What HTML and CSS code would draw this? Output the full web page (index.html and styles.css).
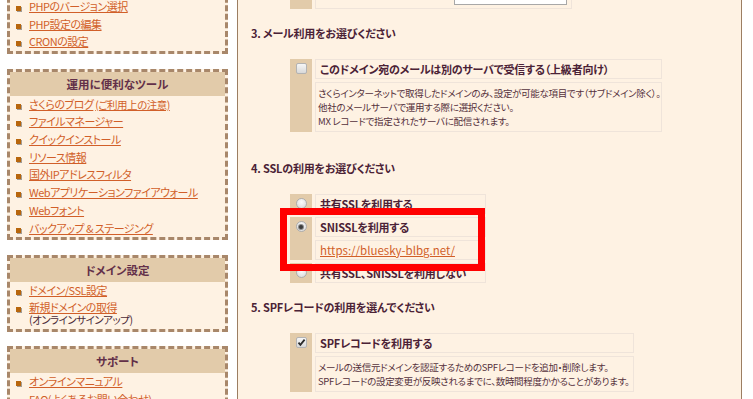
FILE: index.html
```html
<!DOCTYPE html>
<html lang="ja">
<head>
<meta charset="utf-8">
<title>コントロールパネル</title>
<link rel="stylesheet" href="styles.css">
</head>
<body>
<div class="page">
  <aside class="sidebar">
    <div class="box">
      <div class="box-title"></div>
      <ul class="links">
        <li><a href="#">PHPのバージョン選択</a></li>
        <li><a href="#">PHP設定の編集</a></li>
        <li><a href="#">CRONの設定</a></li>
      </ul>
    </div>
    <div class="box">
      <h3 class="box-title">運用に便利なツール</h3>
      <ul class="links">
        <li><a href="#">さくらのブログ</a> <a href="#" class="small">(ご利用上の注意)</a></li>
        <li><a href="#">ファイルマネージャー</a></li>
        <li><a href="#">クイックインストール</a></li>
        <li><a href="#">リソース情報</a></li>
        <li><a href="#">国外IPアドレスフィルタ</a></li>
        <li><a href="#">Webアプリケーションファイアウォール</a></li>
        <li><a href="#">Webフォント</a></li>
        <li><a href="#">バックアップ &amp; ステージング</a></li>
      </ul>
    </div>
    <div class="box">
      <h3 class="box-title">ドメイン設定</h3>
      <ul class="links">
        <li><a href="#">ドメイン/SSL設定</a></li>
        <li><a href="#">新規ドメインの取得</a><span class="note">(オンラインサインアップ)</span></li>
      </ul>
    </div>
    <div class="box">
      <h3 class="box-title">サポート</h3>
      <ul class="links">
        <li><a href="#">オンラインマニュアル</a></li>
        <li><a href="#">FAQ(よくあるお問い合わせ)</a></li>
      </ul>
    </div>
  </aside>

  <main class="panel">
    <div class="opt opt-prev">
      <div class="opt-mark"></div>
      <div class="opt-label opt-input-row"><span class="fake-input"></span></div>
    </div>

    <section class="sec sec-mail">
      <h2 class="sec-title">3. メール利用をお選びください</h2>
      <div class="opt opt-w-mail">
        <div class="opt-mark span-2"><span class="cb"></span></div>
        <div class="opt-label">このドメイン宛のメールは別のサーバで受信する（上級者向け）</div>
        <div class="opt-desc">さくらインターネットで取得したドメインのみ、設定が可能な項目です（サブドメイン除く）。<br>他社のメールサーバで運用する際に選択ください。<br>MX レコードで指定されたサーバに配信されます。</div>
      </div>
    </section>

    <section class="sec">
      <h2 class="sec-title">4. SSLの利用をお選びください</h2>
      <div class="opt opt-w-ssl">
        <div class="opt-mark"><span class="radio"></span></div>
        <div class="opt-label">共有SSLを利用する</div>
        <div class="opt-mark span-2"><span class="radio checked"></span></div>
        <div class="opt-label">SNISSLを利用する</div>
        <div class="opt-label"><a href="#" class="url">https://bluesky-blbg.net/</a></div>
        <div class="opt-mark"><span class="radio"></span></div>
        <div class="opt-label">共有SSL、SNISSLを利用しない</div>
        <div class="highlight"></div>
      </div>
    </section>

    <section class="sec">
      <h2 class="sec-title">5. SPFレコードの利用を選んでください</h2>
      <div class="opt opt-w-spf">
        <div class="opt-mark span-2"><span class="cb checked"><svg viewBox="0 0 11 11" width="11" height="11"><path d="M2.5 5.6 L4.4 7.8 L8.6 2.6" fill="none" stroke="#2b2b2b" stroke-width="1.8"/></svg></span></div>
        <div class="opt-label">SPFレコードを利用する</div>
        <div class="opt-desc">メールの送信元ドメインを認証するためのSPFレコードを追加・削除します。<br>SPFレコードの設定変更が反映されるまでに、数時間程度かかることがあります。</div>
      </div>
    </section>
  </main>
</div>
</body>
</html>
```

FILE: styles.css
```css
* { box-sizing: border-box; }

html, body {
  margin: 0;
  padding: 0;
  background: #ffffff;
}

body {
  font-family: "Noto Sans CJK JP", "Noto Sans", sans-serif;
  font-size: 12px;
  color: #4b2538;
  font-feature-settings: "palt";
  overflow: hidden;
  height: 399px;
}

.page {
  display: flex;
  align-items: flex-start;
  padding-left: 7px;
}

/* ---------- sidebar ---------- */
.sidebar {
  flex: none;
  width: 221px;
  margin-top: -29px;
}

.box {
  border: 3px dashed #a8876a;
  background: #fef2e3;
  margin-bottom: 14.5px;
}

.box-title {
  margin: 0;
  height: 24px;
  line-height: 24px;
  background: #e2cbaa;
  text-align: center;
  font-size: 11.5px;
  font-weight: bold;
  color: #633049;
}

.links {
  list-style: none;
  margin: 0;
  padding: 0;
  font-size: 11px;
  letter-spacing: -0.5px;
}

.links li {
  position: relative;
  padding: 3px 0 3px 19px;
  line-height: 11.7px;
}

.links li::before {
  content: "";
  position: absolute;
  left: 6px;
  top: 8px;
  width: 5px;
  height: 5px;
  background: #b8660c;
  box-shadow: 1px 1px 0 #a49c94;
}

.links a {
  color: #d15f29;
  text-decoration: underline;
  text-underline-offset: 1px;
}

.links a.small {
  font-size: 10.5px;
}

.links .note {
  display: block;
  padding-top: 1px;
  font-size: 10.5px;
  line-height: 10.5px;
  color: #4b2a38;
}

/* ---------- main panel ---------- */
.panel {
  flex: none;
  width: 505px;
  height: 430px;
  margin-left: 9px;
  margin-top: -11px;
  padding: 0 13px;
  background: #fef2e3;
  border-left: 1px solid #9c7e62;
  border-right: 1px solid #9c7e62;
}

.sec {
  margin-top: 14px;
}

.sec-mail {
  margin-bottom: 26px;
}

.sec-title {
  margin: 0 0 16px;
  height: 20px;
  line-height: 20px;
  font-size: 11px;
  letter-spacing: -0.2px;
  font-weight: bold;
  color: #4b2236;
}

.opt {
  position: relative;
  display: grid;
  grid-template-columns: 22px var(--w, 257px);
  gap: 3px;
  margin-left: 39px;
}

.opt-prev { --w: 257px; }
.opt-w-mail { --w: 347px; }
.opt-w-ssl { --w: 171px; }
.opt-w-spf { --w: 319px; }

.opt-mark {
  grid-column: 1;
  background: #e2cbaa;
  display: flex;
  justify-content: center;
  align-items: flex-start;
  padding-top: 4px;
  min-height: 20px;
}

.opt-mark.span-2 {
  grid-row: span 2;
}

.opt-label,
.opt-desc {
  grid-column: 2;
  border: 1px solid #efe4da;
  white-space: nowrap;
}

.opt-label {
  height: 20px;
  line-height: 18px;
  padding: 0 4px;
  font-size: 11px;
  letter-spacing: -0.2px;
  font-weight: bold;
  color: #4b2236;
}

.opt-desc {
  padding: 3px 2px;
  line-height: 14px;
  font-size: 9.5px;
  letter-spacing: -0.3px;
  color: #55313c;
}

.opt-input-row {
  display: flex;
  justify-content: flex-end;
  align-items: flex-end;
  padding: 0 4px 3px 0;
}

.fake-input {
  display: block;
  width: 113px;
  height: 16px;
  background: #ffffff;
  border: 1px solid #a8a8a8;
}

.url {
  color: #d15f29;
  font-size: 11.5px;
  font-weight: normal;
  letter-spacing: 0;
  text-decoration: underline;
}

/* checkbox & radio */
.cb {
  display: block;
  width: 11px;
  height: 11px;
  border: 1px solid #b3b3b3;
  border-radius: 2px;
  background: linear-gradient(#f6f6f6, #d9d9d9);
  position: relative;
}

.cb svg {
  position: absolute;
  left: -1px;
  top: -1px;
}

.radio {
  display: block;
  width: 11px;
  height: 11px;
  border: 1px solid #adadad;
  border-radius: 50%;
  background: radial-gradient(circle at 50% 35%, #fbfbfb, #d6d6d6);
  position: relative;
}

.radio.checked::after {
  content: "";
  position: absolute;
  left: 2.5px;
  top: 2.5px;
  width: 4px;
  height: 4px;
  border-radius: 50%;
  background: #3c3c3c;
  box-shadow: 0 0 0 1px #8a8a8a;
}

/* annotation overlay */
.highlight {
  position: absolute;
  left: -10px;
  top: 14px;
  width: 205px;
  height: 63px;
  border: 7px solid #ff0000;
  pointer-events: none;
}
```
